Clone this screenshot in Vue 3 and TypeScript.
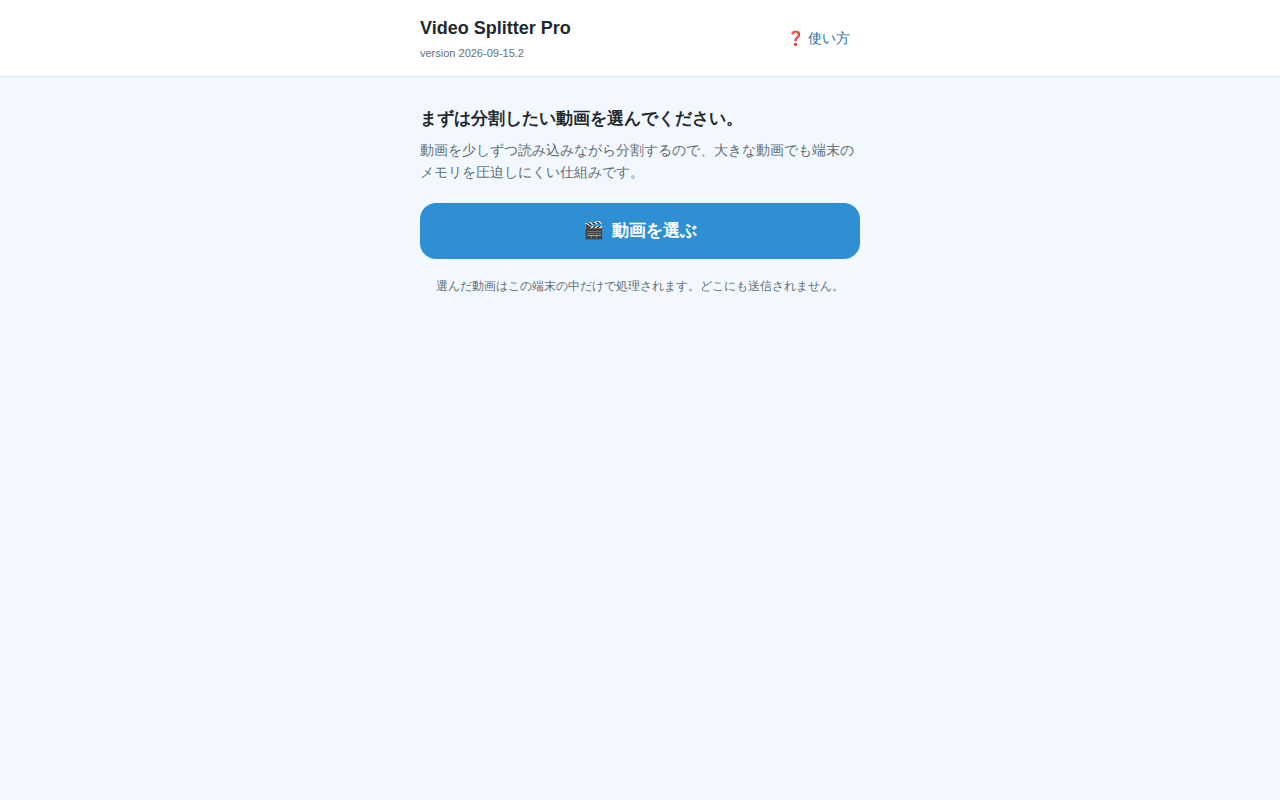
<script setup lang="ts">
import { ref } from 'vue'

const version: string = '2026-09-15.2'
const picker = ref<HTMLInputElement | null>(null)

function choose(): void {
  picker.value?.click()
}
</script>

<template>
  <div class="page">
    <header class="header">
      <div class="bar">
        <div>
          <h1 class="title">Video Splitter Pro</h1>
          <p class="version">version {{ version }}</p>
        </div>
        <button class="help" type="button">❓ 使い方</button>
      </div>
    </header>
    <main class="main">
      <h2 class="lead">まずは分割したい動画を選んでください。</h2>
      <p class="text">動画を少しずつ読み込みながら分割するので、大きな動画でも端末のメモリを圧迫しにくい仕組みです。</p>
      <button class="pick" type="button" @click="choose">
        <span aria-hidden="true">🎬</span>
        <span>動画を選ぶ</span>
      </button>
      <input ref="picker" type="file" accept="video/*" aria-label="動画を選ぶ" hidden />
      <p class="note">選んだ動画はこの端末の中だけで処理されます。どこにも送信されません。</p>
    </main>
  </div>
</template>

<style>
body {
  margin: 0;
  background: #f3f8fe;
}
</style>

<style scoped>
.page {
  font-family: "Liberation Sans", sans-serif;
  color: #1f2a30;
  line-height: 1.6;
}
.header {
  background: #fff;
  border-bottom: 1px solid #d8e6f0;
}
.bar {
  display: flex;
  align-items: center;
  justify-content: space-between;
  max-width: 440px;
  margin: 0 auto;
  padding: 14px 20px;
}
.title {
  margin: 0;
  font-size: 18px;
  line-height: 28px;
}
.version {
  margin: 2px 0 0;
  font-size: 11px;
  line-height: 18px;
  color: #5f6f78;
}
.help {
  padding: 8px 10px;
  border: 0;
  background: none;
  font: inherit;
  font-size: 14px;
  line-height: 22px;
  color: #1f6fa8;
  cursor: pointer;
}
.main {
  max-width: 440px;
  margin: 0 auto;
  padding: 28px 20px;
}
.lead {
  margin: 0 0 6px;
  font-size: 17px;
  line-height: 28px;
}
.text {
  margin: 0 0 20px;
  font-size: 14px;
  line-height: 22px;
  color: #5f6f78;
}
.pick {
  display: flex;
  align-items: center;
  justify-content: center;
  gap: 8px;
  width: 100%;
  min-height: 56px;
  border: 0;
  border-radius: 16px;
  background: #2f8fd3;
  color: #fff;
  font: inherit;
  font-size: 17px;
  font-weight: 700;
  cursor: pointer;
}
.note {
  margin: 18px 0 0;
  font-size: 12px;
  line-height: 19px;
  text-align: center;
  color: #5f6f78;
}
</style>
